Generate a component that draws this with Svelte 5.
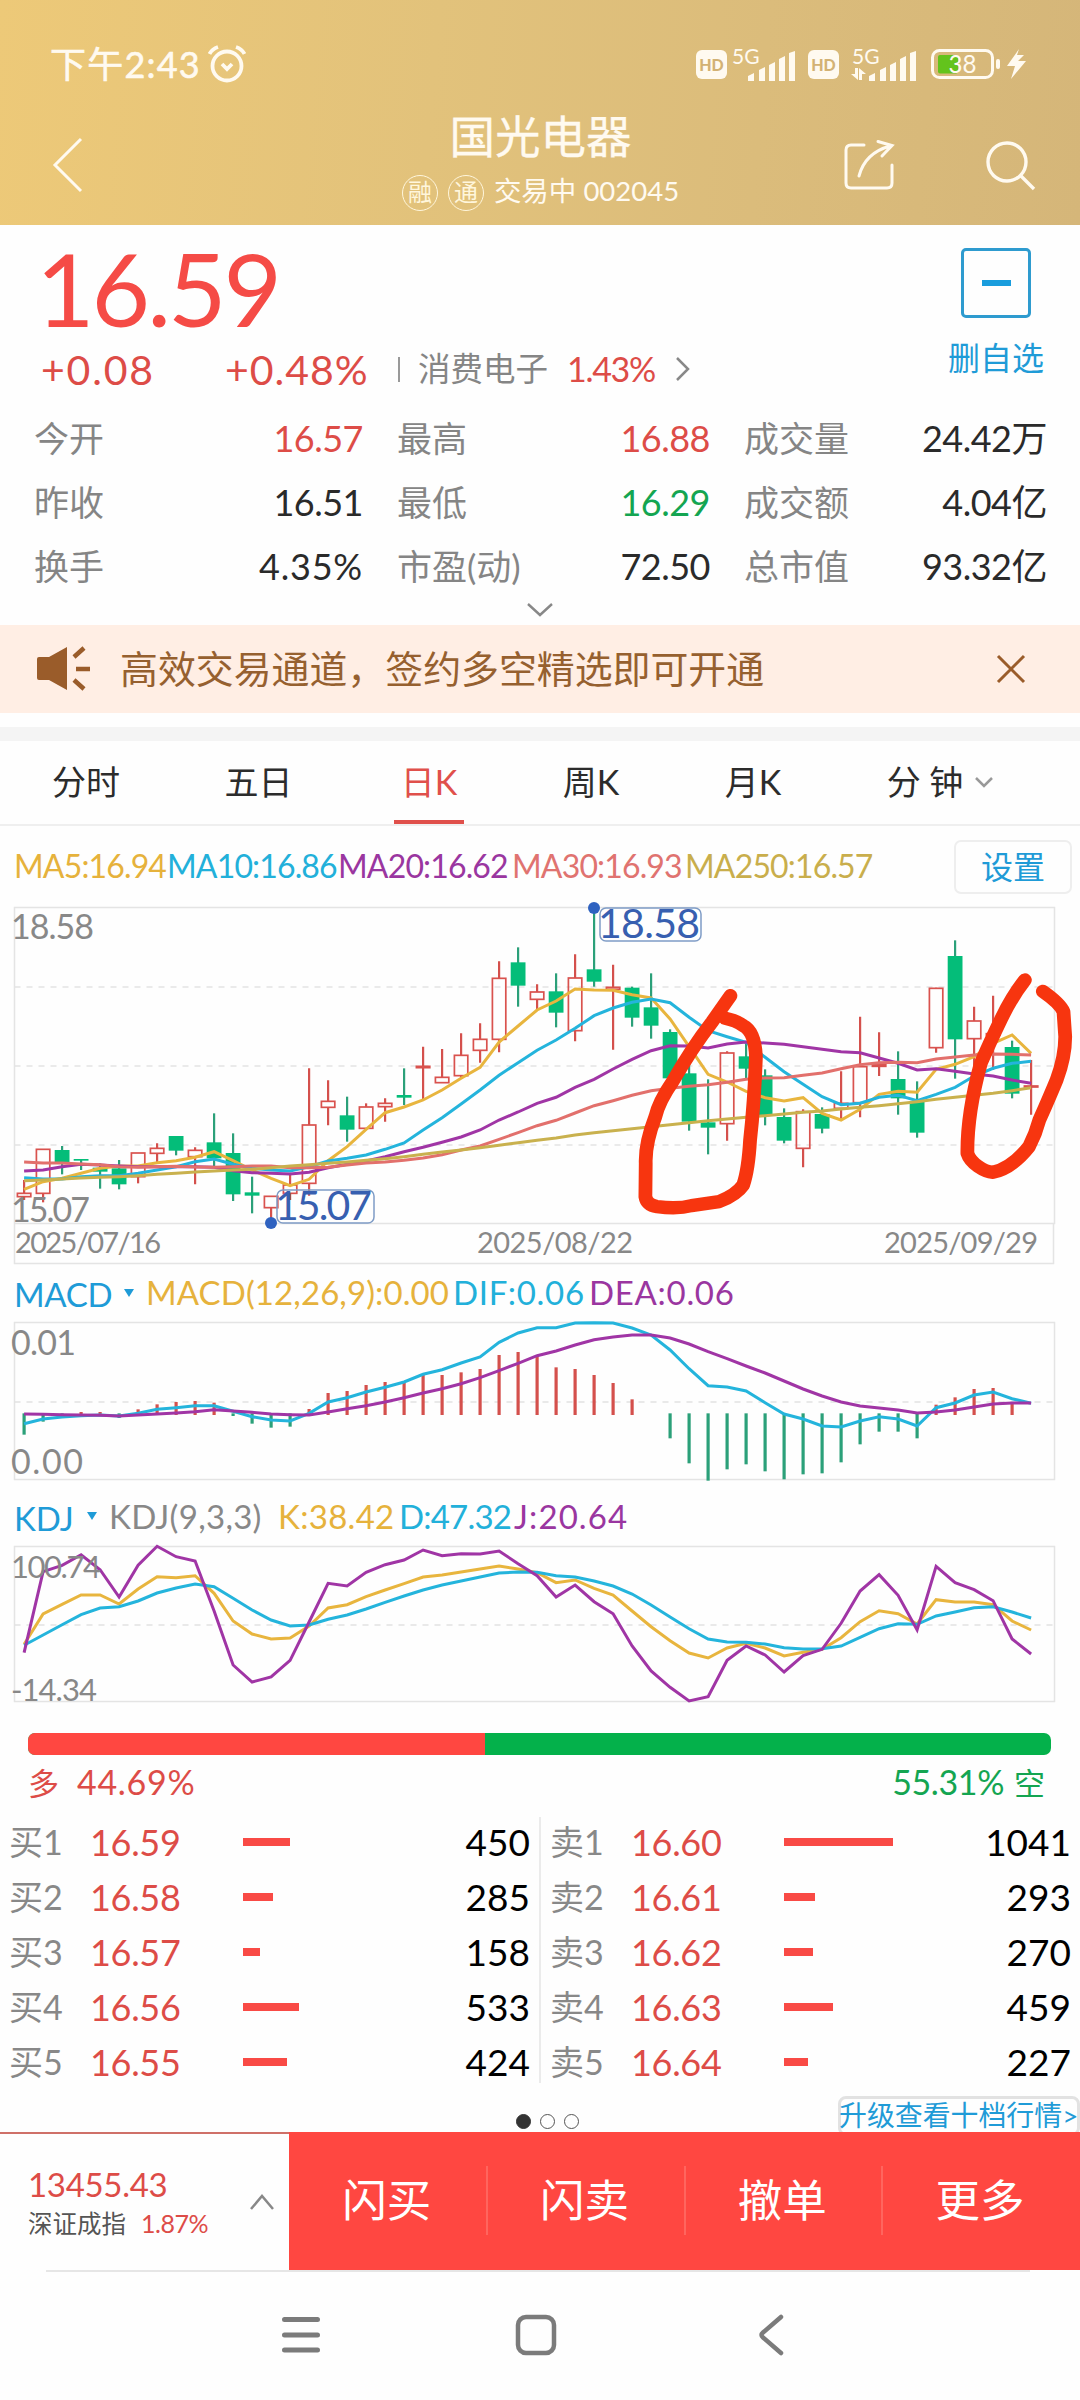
<script>
  // Horizontal position of the n-th trading day.
  const px = (i) => 24.1 + 19 * i;
  // Chart data is stored in thirds of a pixel below the chart origin.
  const main = (v) => 830 + v / 3;
  const sub = (v) => 1270 + v / 3;

  const line = (values, scale) =>
    values.map((v, i) => `${px(i).toFixed(1)},${scale(v).toFixed(1)}`).join(' ');

  // [direction, body top, body bottom, high, low]
  const candles = [
    ['r', 1090, 1100, 1050, 1110], ['r', 958, 1090, 958, 1117], ['g', 960, 998, 948, 1033],
    ['g', 987, 992, 987, 1020], ['g', 1013, 1025, 1000, 1076], ['g', 1015, 1063, 990, 1078],
    ['r', 969, 1040, 969, 1060], ['r', 955, 970, 940, 1000], ['g', 918, 962, 918, 976],
    ['r', 961, 980, 952, 1063], ['g', 937, 985, 850, 1010], ['g', 969, 1093, 910, 1113],
    ['g', 1087, 1097, 1040, 1150], ['r', 1099, 1133, 1099, 1170], ['r', 1065, 1090, 1030, 1110],
    ['r', 885, 1060, 715, 1097], ['r', 814, 832, 751, 886], ['g', 856, 899, 800, 935],
    ['r', 831, 895, 820, 895], ['r', 820, 830, 805, 875], ['g', 795, 803, 715, 825],
    ['r', 709, 713, 650, 808], ['r', 742, 758, 657, 758], ['r', 676, 737, 610, 745],
    ['r', 628, 661, 580, 698], ['r', 445, 628, 394, 667], ['g', 397, 467, 352, 530],
    ['r', 486, 508, 463, 540], ['g', 484, 548, 430, 592], ['r', 444, 602, 373, 634],
    ['g', 418, 455, 233, 470], ['r', 472, 478, 404, 659], ['g', 473, 563, 470, 590],
    ['g', 532, 587, 430, 626], ['g', 606, 745, 598, 745], ['g', 730, 875, 700, 902],
    ['g', 877, 893, 748, 973], ['r', 669, 881, 664, 932], ['g', 679, 716, 640, 750],
    ['g', 736, 855, 718, 886], ['g', 861, 932, 835, 940], ['r', 845, 955, 838, 1012],
    ['g', 852, 896, 832, 910], ['r', 820, 835, 724, 868], ['r', 710, 818, 560, 862],
    ['r', 704, 709, 607, 738], ['g', 747, 805, 664, 854], ['g', 815, 908, 754, 923],
    ['r', 475, 653, 473, 668], ['g', 378, 628, 331, 746], ['r', 573, 626, 530, 720],
    ['r', 611, 615, 497, 720], ['g', 651, 791, 632, 805], ['r', 768, 771, 690, 854]
  ];

  const averages = [
    { color: '#e8b53e', values: [1078, 1055, 1045, 1030, 1015, 1008, 1008, 998, 992, 982, 965, 992, 1020, 1045, 1067, 1048, 992, 950, 898, 848, 831, 810, 780, 745, 712, 636, 588, 540, 513, 477, 480, 481, 494, 504, 567, 650, 733, 756, 784, 803, 813, 803, 850, 870, 838, 793, 784, 787, 718, 703, 680, 640, 615, 670] },
    { color: '#24b4dc', values: [1043, 1047, 1047, 1040, 1037, 1037, 1030, 1020, 1010, 995, 987, 1003, 1015, 1020, 1023, 1010, 993, 985, 975, 958, 939, 900, 863, 822, 780, 736, 698, 661, 630, 595, 557, 534, 517, 507, 518, 562, 602, 620, 637, 682, 725, 763, 800, 824, 820, 802, 796, 812, 793, 772, 738, 715, 700, 694] },
    { color: '#a035a5', values: [1023, 1020, 1010, 1003, 1005, 1008, 1010, 1010, 1010, 1010, 1012, 1022, 1028, 1030, 1032, 1027, 1013, 1003, 993, 980, 965, 952, 937, 921, 900, 870, 846, 820, 802, 772, 748, 717, 688, 662, 647, 648, 654, 642, 636, 639, 643, 650, 658, 665, 668, 684, 700, 720, 716, 724, 732, 738, 750, 760] },
    { color: '#e2706c', values: [996, 999, 999, 1002, 1004, 1010, 1012, 1010, 1009, 1011, 1012, 1010, 1008, 1008, 1013, 1013, 1012, 1005, 999, 996, 991, 984, 974, 960, 948, 928, 908, 887, 871, 849, 827, 812, 796, 782, 775, 769, 764, 757, 748, 744, 743, 736, 729, 716, 704, 698, 697, 698, 687, 681, 675, 672, 673, 675] },
    { color: '#c9b14e', values: [1052, 1050, 1047, 1044, 1042, 1040, 1037, 1033, 1030, 1026, 1023, 1020, 1018, 1013, 1008, 1004, 1000, 996, 991, 986, 980, 973, 966, 960, 953, 946, 938, 931, 924, 915, 908, 902, 896, 890, 884, 878, 872, 867, 862, 857, 852, 847, 843, 837, 832, 827, 821, 815, 808, 802, 796, 790, 782, 773] }
  ];

  const histogram = [494, 455, 438, 426, 426, 444, 418, 403, 396, 393, 398, 438, 461, 473, 470, 417, 369, 363, 345, 336, 337, 315, 315, 307, 297, 255, 246, 258, 292, 297, 315, 339, 388, 0, 505, 580, 632, 598, 583, 604, 628, 613, 610, 577, 523, 485, 485, 505, 404, 382, 357, 354, 400, 0];
  const macdLines = [
    { color: '#24b4dc', values: [461, 447, 441, 437, 435, 438, 430, 418, 413, 407, 407, 424, 440, 450, 453, 430, 396, 383, 366, 352, 336, 313, 299, 279, 261, 217, 189, 173, 173, 159, 158, 159, 174, 195, 240, 296, 347, 351, 363, 398, 432, 447, 468, 471, 453, 440, 447, 468, 413, 399, 375, 366, 386, 400] },
    { color: '#a035a5', values: [432, 433, 434, 435, 436, 438, 435, 432, 429, 425, 419, 423, 427, 432, 434, 435, 426, 416, 407, 396, 383, 369, 356, 341, 323, 302, 280, 257, 243, 225, 209, 201, 195, 195, 204, 222, 245, 266, 288, 309, 333, 357, 378, 396, 408, 414, 420, 429, 426, 420, 411, 402, 399, 399] }
  ];
  const kdjLines = [
    { color: '#e8b53e', values: [1123, 1032, 1003, 975, 975, 1002, 957, 920, 923, 917, 970, 1053, 1092, 1107, 1104, 1068, 1014, 1004, 980, 960, 941, 921, 915, 906, 897, 888, 897, 908, 938, 930, 955, 975, 1023, 1070, 1112, 1149, 1164, 1134, 1120, 1134, 1158, 1147, 1138, 1103, 1055, 1022, 1031, 1062, 989, 996, 996, 1004, 1053, 1080] },
    { color: '#24b4dc', values: [1126, 1095, 1064, 1034, 1014, 1010, 993, 969, 954, 942, 950, 985, 1020, 1050, 1068, 1065, 1048, 1035, 1017, 997, 978, 960, 945, 933, 921, 909, 906, 907, 917, 921, 933, 948, 972, 1005, 1041, 1076, 1107, 1116, 1117, 1122, 1133, 1137, 1136, 1128, 1102, 1076, 1061, 1063, 1038, 1026, 1013, 1010, 1026, 1044] },
    { color: '#a035a5', values: [1148, 905, 886, 854, 899, 981, 886, 829, 860, 873, 1023, 1185, 1236, 1221, 1171, 1056, 940, 948, 907, 884, 870, 840, 857, 851, 852, 843, 881, 917, 981, 945, 995, 1031, 1128, 1203, 1252, 1293, 1280, 1171, 1128, 1155, 1206, 1157, 1138, 1060, 963, 914, 976, 1080, 889, 938, 959, 992, 1107, 1152] }
  ];

  const stats = [
    ['今开', '16.57', 'up'], ['最高', '16.88', 'up'], ['成交量', '24.42万', ''],
    ['昨收', '16.51', ''], ['最低', '16.29', 'down'], ['成交额', '4.04亿', ''],
    ['换手', '4.35%', 'wide'], ['市盈(动)', '72.50', ''], ['总市值', '93.32亿', '']
  ];
  const tabs = ['分时', '五日', '日K', '周K', '月K'];
  const bids = [
    ['买1', '16.59', 47, '450'], ['买2', '16.58', 30, '285'], ['买3', '16.57', 17, '158'],
    ['买4', '16.56', 56, '533'], ['买5', '16.55', 44, '424']
  ];
  const asks = [
    ['卖1', '16.60', 109, '1041'], ['卖2', '16.61', 31, '293'], ['卖3', '16.62', 29, '270'],
    ['卖4', '16.63', 49, '459'], ['卖5', '16.64', 24, '227']
  ];
  const actions = ['闪买', '闪卖', '撤单', '更多'];
</script>

{#snippet bars()}
  <svg class="bars" width="48" height="30" viewBox="0 0 48 30">
    <path d="M0 25l6-3v8H0zM11 19l6-3v14h-6zM21 14l6-3v19h-6zM31 8l6-3v25h-6zM41 2l6-2v30h-6z" fill="#fffaf0" />
  </svg>
{/snippet}

{#snippet book(rows)}
  <div class="side">
    {#each rows as [label, price, width, count]}
      <div class="order">
        <span class="lv">{label}</span>
        <span class="pr">{price}</span>
        <i style:width="{width}px"></i>
        <span class="qty">{count}</span>
      </div>
    {/each}
  </div>
{/snippet}

<div class="phone">
  <header>
    <div class="status">
      <span class="clock">下午2:43</span>
      <svg class="alarm" width="38" height="38" viewBox="0 0 38 38" fill="none" stroke="#fffaf0" stroke-width="3.8">
        <circle cx="19" cy="21" r="14.5" />
        <path d="M1.500 9Q4 4 10 2M28 2q6 2 8.500 7M14 19l5 5 5-5" />
      </svg>
      <div class="icons">
        <span class="hd">HD</span>
        <span class="net"><small>5G</small>{@render bars()}</span>
        <span class="hd second">HD</span>
        <span class="net wide">
          <small>5G</small>
          <svg class="updown" width="15" height="12" viewBox="0 0 15 12"><path d="M4 0h3v12L0 6h4zM8 0l7 6h-4v6H8z" fill="#fffaf0" /></svg>
          {@render bars()}
        </span>
        <svg class="battery" width="96" height="32" viewBox="930 48 96 32">
          <rect x="932.500" y="50.500" width="60" height="27" rx="7" fill="none" stroke="#fffaf0" stroke-width="3" />
          <rect x="938" y="55" width="20" height="18.500" rx="2" fill="#63c31c" />
          <rect x="996" y="59" width="4" height="10" rx="2" fill="#fffaf0" />
          <text x="948.500" y="73" font-size="25" textLength="28" lengthAdjust="spacingAndGlyphs" fill="#fffaf0">38</text>
          <path d="M1019 49l-12 17h8l-4 13 15-18h-8l6-6h-7z" fill="#fffaf0" />
        </svg>
      </div>
    </div>
    <div class="titlebar">
      <svg class="back" width="32" height="56" viewBox="0 0 32 56" fill="none" stroke="#fffaf0" stroke-width="3"><path d="M29 2L3 28l26 26" /></svg>
      <div class="title">
        <h1>国光电器</h1>
        <p><b>融</b><b>通</b><span>交易中 002045</span></p>
      </div>
      <div class="tools">
        <svg width="52" height="52" viewBox="0 0 52 52" fill="none" stroke="#fffaf0" stroke-width="3">
          <path d="M21 6H8q-5 0-5 5v33q0 5 5 5h36q5 0 5-5V26M16 37Q22 14 47 7M35 2.500L49 6.500 39 17" stroke-linecap="round" />
        </svg>
        <svg width="52" height="52" viewBox="0 0 52 52" fill="none" stroke="#fffaf0" stroke-width="3.400">
          <circle cx="22" cy="23" r="19" /><path d="M35 36l14 14" />
        </svg>
      </div>
    </div>
  </header>

  <section class="quote">
    <div class="head">
      <div class="price">
        <strong>16.59</strong>
        <div class="change">
          <span class="diff">+0.08</span><span class="pct">+0.48%</span><i></i>
          <span class="sector">消费电子</span><span class="spct">1.43%</span>
          <svg width="16" height="26" viewBox="0 0 16 26" fill="none" stroke="#888" stroke-width="2.500"><path d="M2 2l11 11L2 24" /></svg>
        </div>
      </div>
      <div class="fav">
        <div class="box"><i></i></div>
        <span>删自选</span>
      </div>
    </div>
    <div class="stats">
      {#each stats as [label, value, tone]}
        <div><span>{label}</span><em class={tone}>{value}</em></div>
      {/each}
    </div>
    <svg class="more" width="28" height="16" viewBox="0 0 28 16" fill="none" stroke="#888" stroke-width="2.400"><path d="M2 2l12 11L26 2" /></svg>
  </section>

  <aside class="banner">
    <svg class="horn" width="56" height="46" viewBox="0 0 56 46">
      <path d="M1 13q0-2 2-2h10L31 1v43L13 34H3q-2 0-2-2z" fill="#9a5c2a" />
      <path d="M38 11l10-9M40 23h14M38 34l10 9" stroke="#9a5c2a" stroke-width="4.500" />
    </svg>
    <span>高效交易通道，签约多空精选即可开通</span>
    <svg class="close" width="30" height="30" viewBox="0 0 30 30" stroke="#9a5c2a" stroke-width="3"><path d="M2 2l26 26M28 2L2 28" /></svg>
  </aside>
  <div class="strip"></div>

  <nav class="tabs">
    {#each tabs as tab}
      <span class:active={tab === '日K'}>{tab}</span>
    {/each}
    <span class="minute">分 钟<svg width="18" height="12" viewBox="0 0 18 12" fill="none" stroke="#999" stroke-width="2.500"><path d="M1 2l8 8 8-8" /></svg></span>
  </nav>

  <div class="legend">
    <span class="y m5">MA5:16.94</span><span class="c m10">MA10:16.86</span><span class="p m20">MA20:16.62</span><span class="r m30">MA30:16.93</span><span class="k m250">MA250:16.57</span>
    <button>设置</button>
  </div>

  <svg class="chart" width="1080" height="370" viewBox="0 900 1080 370">
    <g fill="none" stroke="#e4e4e4" stroke-width="1.500">
      <path d="M14.500 907.500H1054.500V1223.500H14.500zM14.500 1223.500V1263.500H1053.500V1223.500" />
      <path d="M14.500 987H1054M14.500 1066H1054M14.500 1145H1054" stroke-dasharray="6 6" />
    </g>
    {#each candles as [tone, top, bottom, high, low], i}
      {#if tone === 'g'}
        <path d="M{px(i)} {main(high)}V{main(low)}" stroke="#2ba079" stroke-width="2.200" />
        <rect x={px(i) - 7.4} y={main(top)} width="14.800" height={(bottom - top) / 3} fill="#04bd79" />
      {:else}
        <path d="M{px(i)} {main(high)}V{main(top)}M{px(i)} {main(bottom)}V{main(low)}" stroke="#d4504c" stroke-width="2.200" />
        <rect x={px(i) - 6.7} y={main(top)} width="13.400" height={(bottom - top) / 3} fill="none" stroke="#d9524e" stroke-width="1.700" />
      {/if}
    {/each}
    {#each averages as { color, values }}
      <polyline points={line(values, main)} fill="none" stroke={color} stroke-width="3" />
    {/each}
    <g fill="#888" font-size="34">
      <text x="11" y="939" textLength="83">18.58</text>
      <text x="11" y="1222" textLength="79">15.07</text>
      <g font-size="29">
        <text x="15" y="1253" textLength="146">2025/07/16</text>
        <text x="477" y="1253" textLength="156">2025/08/22</text>
        <text x="884" y="1253" textLength="154">2025/09/29</text>
      </g>
    </g>
    <g fill="none" stroke="#7f9cc6" stroke-width="1.500">
      <rect x="600" y="908" width="101" height="33" rx="6" />
      <rect x="277" y="1190" width="97" height="33" rx="6" />
    </g>
    <g fill="#2f62c0"><circle cx="594" cy="908" r="6" /><circle cx="271" cy="1223" r="6" /></g>
    <g fill="#375fb0" font-size="41">
      <text x="598" y="938" textLength="102">18.58</text>
      <text x="275" y="1220" textLength="97">15.07</text>
    </g>
    <g transform="translate(540 830) scale(.3444 .3333)" fill="none" stroke="#f7350f" stroke-width="40" stroke-linecap="round" stroke-linejoin="round">
      <path d="M553 497L500 575Q440 655 385 755Q345 815 335 860Q305 940 307 1000L306 1100Q310 1125 340 1130Q400 1138 440 1127L520 1115Q570 1095 590 1065Q605 1020 610 930Q622 820 627 680Q624 605 590 587Q570 572 538 565" />
      <path d="M1408 450Q1370 500 1340 565Q1305 640 1280 700Q1240 850 1241 970C1250 1000 1290 1025 1315 1027Q1370 1015 1420 950Q1440 910 1450 870Q1480 800 1500 750Q1525 680 1525 620L1520 545Q1510 520 1460 484" />
    </g>
  </svg>

  <div class="subhead">
    <span class="pick macd">MACD</span><i></i>
    <span class="y s1">MACD(12,26,9):0.00</span><span class="c s2">DIF:0.06</span><span class="p s3">DEA:0.06</span>
  </div>
  <svg class="chart" width="1080" height="170" viewBox="0 1315 1080 170">
    <rect x="14.500" y="1322.500" width="1040" height="157" fill="none" stroke="#e4e4e4" stroke-width="1.500" />
    <path d="M14.500 1402H1054" stroke="#e2e2e2" stroke-width="1.500" stroke-dasharray="6 6" />
    {#each histogram as v, i}
      {#if v}
        <path d="M{px(i)} {sub(v > 433 ? 430 : 435)}V{sub(v)}" stroke={v > 433 ? '#2ba079' : '#d4504c'} stroke-width="3.200" />
      {/if}
    {/each}
    {#each macdLines as { color, values }}
      <polyline points={line(values, sub)} fill="none" stroke={color} stroke-width="3" />
    {/each}
    <g fill="#888" font-size="34">
      <text x="11" y="1355" textLength="65">0.01</text>
      <text x="11" y="1474" textLength="72">0.00</text>
    </g>
  </svg>

  <div class="subhead low">
    <span class="pick kdj">KDJ</span><i></i>
    <span class="n s4">KDJ(9,3,3)</span><span class="y s5">K:38.42</span><span class="c s6">D:47.32</span><span class="p s7">J:20.64</span>
  </div>
  <svg class="chart" width="1080" height="170" viewBox="0 1540 1080 170">
    <rect x="14.500" y="1546.500" width="1040" height="155" fill="none" stroke="#e4e4e4" stroke-width="1.500" />
    <path d="M14.500 1625H1054" stroke="#e2e2e2" stroke-width="1.500" stroke-dasharray="6 6" />
    {#each kdjLines as { color, values }}
      <polyline points={line(values, sub)} fill="none" stroke={color} stroke-width="3" />
    {/each}
    <g fill="#888" font-size="31">
      <text x="11" y="1578" textLength="90">100.74</text>
      <text x="11" y="1701" textLength="86">-14.34</text>
    </g>
  </svg>

  <section class="ratio">
    <div class="meter"><i></i></div>
    <p><span class="long">多<em>44.69%</em></span><span class="short"><em>55.31%</em>空</span></p>
  </section>

  <section class="book">
    {@render book(bids)}
    {@render book(asks)}
  </section>

  <div class="pager">
    <div class="dots"><i class="on"></i><i></i><i></i></div>
    <span class="upgrade">升级查看十档行情&gt;</span>
  </div>

  <footer>
    <div class="index">
      <div>
        <strong>13455.43</strong>
        <p>深证成指<em>1.87%</em></p>
      </div>
      <svg width="26" height="18" viewBox="0 0 26 18" fill="none" stroke="#888" stroke-width="2.500"><path d="M2 16L13 3l11 13" /></svg>
    </div>
    {#each actions as action}
      <button>{action}</button>
    {/each}
  </footer>

  <div class="sysnav">
    <svg width="40" height="40" viewBox="0 0 40 40" stroke="#7b7b7b" stroke-width="5" stroke-linecap="round"><path d="M3.500 4.500h33M3.500 20h33M3.500 35h33" /></svg>
    <svg width="42" height="42" viewBox="0 0 42 42" fill="none" stroke="#7b7b7b" stroke-width="4.500"><rect x="3" y="3" width="36" height="36" rx="8" /></svg>
    <svg class="nav-back" width="28" height="42" viewBox="0 0 28 42" fill="none" stroke="#7b7b7b" stroke-width="4.500" stroke-linecap="round"><path d="M24 3L6 18.500q-3 2.500 0 5L24 39" /></svg>
  </div>
</div>

<style>
  :global(body) { margin: 0; background: #fefefe; }
  .phone { width: 1080px; height: 2400px; overflow: hidden; font-family: Lato, 'Noto Sans CJK SC', sans-serif; color: #2c2c2c; line-height: 1; background: #fefefe; }
  svg { display: block; flex: none; }
  h1, p { margin: 0; font-weight: 400; }
  em, i { font-style: normal; }
  button { font: inherit; border: 0; background: none; padding: 0; }
  span, strong, em { white-space: nowrap; }

  header { height: 225px; background: linear-gradient(95deg, #edc978 0%, #e2c27b 40%, #dbbc7b 70%, #d5b679 100%); color: #fffaf0; }
  .status { display: flex; height: 112px; padding: 16px 54px 0 50px; box-sizing: border-box; align-items: center; }
  .clock { font-size: 36px; width: 158px; letter-spacing: 1.2px; -webkit-text-stroke: 0.6px #fffaf0; }
  .icons { display: flex; align-items: center; margin-left: auto; }
  .hd { width: 31px; height: 29px; border-radius: 6px; background: #fffaf0; color: #d3b274; font-size: 16px; font-weight: 900; text-align: center; line-height: 29px; }
  .second { margin-left: 12px; }
  .net { position: relative; width: 69px; height: 34px; }
  .net small { position: absolute; left: 5px; top: 0; font-size: 21px; line-height: 18px; }
  .net .bars { position: absolute; right: 0; bottom: 0; }
  .wide { width: 78px; margin-right: 13px; }
  .wide small { left: 13px; }
  .updown { position: absolute; left: 12px; bottom: 1px; }
  .titlebar { display: flex; height: 113px; justify-content: space-between; padding-left: 52px; }
  .back { margin-top: 25px; }
  .title { width: 270px; margin-left: 154px; text-align: center; }
  h1 { font-size: 45.500px; line-height: 50px; -webkit-text-stroke: 0.3px #fffaf0; }
  .title p { display: flex; gap: 10px; justify-content: center; align-items: center; margin-top: 12px; height: 38px; font-size: 27.500px; }
  .title p span { margin-top: -4px; }
  .title b { flex: none; width: 34px; height: 34px; border: 1.500px solid #fff6dc; border-radius: 50%; font-size: 24px; font-weight: 400; line-height: 32px; color: #fff6dc; }
  .tools { display: flex; gap: 90px; width: 237px; margin-top: 27px; }

  .quote { height: 400px; }
  .head { display: flex; justify-content: space-between; height: 181px; padding: 0 34px 0 41px; }
  .price strong { display: block; margin: 9px 0 7px -5px; height: 108px; line-height: 108px; font-size: 101px; font-weight: 400; letter-spacing: -3px; color: #f54b46; }
  .change { display: flex; align-items: center; height: 40px; color: #dd4c47; }
  .diff { width: 184px; font-size: 41px; letter-spacing: 1.800px; }
  .pct { width: 173px; font-size: 41px; letter-spacing: 1px; }
  .change i { width: 2px; height: 25px; margin-right: 18px; background: #999; }
  .sector { width: 149px; font-size: 32.500px; color: #858585; }
  .spct { width: 108px; font-size: 34px; letter-spacing: -1.300px; }
  .fav { display: flex; flex-direction: column; align-items: center; width: 100px; padding-top: 23px; font-size: 32px; color: #1f9bd7; }
  .box { display: grid; place-items: center; width: 64px; height: 64px; border: 3px solid #2e9bcf; border-radius: 5px; }
  .box i { width: 29px; height: 6px; background: #1a9ddd; }
  .fav span { margin-top: 24px; }
  .stats { display: grid; grid-template-columns: 329px 313px 303px; column-gap: 34px; padding-left: 34px; grid-auto-rows: 64px; }
  .stats div { display: flex; justify-content: space-between; align-items: center; font-size: 35px; color: #858585; }
  .stats em { font-size: 36px; letter-spacing: -0.500px; color: #2a2a2a; }
  .stats em.wide { letter-spacing: 0.800px; margin: 0; width: auto; }
  .stats em.up { color: #dd4c47; }
  .stats em.down { color: #14a551; }
  .more { margin: 4px auto 0; }

  .banner { display: flex; align-items: center; height: 88px; padding: 0 54px 0 36px; background: #ffeee4; color: #96602f; font-size: 37.900px; }
  .horn { margin-right: 28px; }
  .close { margin-left: auto; }
  .strip { height: 14px; margin-top: 14px; background: #f4f4f4; }

  .tabs { display: grid; grid-template-columns: 172px 173px 168px 156px 168px 206px; height: 83px; border-bottom: 2px solid #efefef; font-size: 34px; }
  .tabs span { display: flex; justify-content: center; align-items: center; position: relative; padding-bottom: 2px; }
  .tabs .active { color: #e0504b; }
  .active::after { content: ''; position: absolute; left: 49px; bottom: 0; width: 70px; height: 4px; background: #e0504b; }
  .minute svg { margin-left: 12px; }

  .legend { display: flex; align-items: center; height: 74px; padding: 0 8px 0 14px; font-size: 32px; letter-spacing: -0.850px; }
  .legend button { width: 114px; height: 50px; margin-left: auto; border: 2px solid #eee; border-radius: 7px; color: #1f9bd7; font-size: 32px; letter-spacing: 0; line-height: 46px; box-sizing: content-box; margin-top: 7px; }
  .legend span { padding-top: 6px; }
  .m5 { width: 153px; }
  .m10 { width: 171px; }
  .m20 { width: 174px; }
  .m30 { width: 173px; }
  .y { color: #e6b23c; }
  .c { color: #22b0da; }
  .p { color: #9a36a0; }
  .r { color: #e07370; }
  .k { color: #c9ae4c; }
  .n { color: #888; }

  .subhead { display: flex; align-items: center; height: 45px; padding-left: 14px; font-size: 33px; }
  .low { height: 48px; padding-top: 7px; }
  .subhead i { border: 5px solid transparent; border-top: 8px solid #1f9bd7; border-bottom: 0; margin-right: 12px; }
  .pick { color: #1f9bd7; padding-top: 4px; }
  .macd { width: 110px; letter-spacing: -0.300px; }
  .kdj { width: 73px; }
  .s1 { width: 307px; letter-spacing: 0.100px; }
  .s2 { width: 136px; letter-spacing: 0.700px; }
  .s3 { letter-spacing: 0.700px; }
  .s4 { width: 169px; letter-spacing: 0.300px; }
  .s5 { width: 121px; letter-spacing: 0.300px; }
  .s6 { width: 115px; letter-spacing: -0.800px; }
  .s7 { letter-spacing: 1.100px; }

  .ratio { height: 107px; padding: 23px 29px 0 28px; box-sizing: border-box; }
  .meter { height: 22px; border-radius: 7px; overflow: hidden; background: #04b14b; }
  .meter i { display: block; width: 44.69%; height: 100%; background: #ff4741; }
  .ratio p { display: flex; justify-content: space-between; margin-top: 10px; height: 34px; align-items: center; font-size: 31px; }
  .ratio em { font-size: 34px; }
  .long { color: #dd4c47; }
  .long em { margin-left: 18px; letter-spacing: 0.700px; }
  .short { color: #14a551; margin-right: 6px; }
  .short em { margin-right: 10px; letter-spacing: -0.400px; }

  .book { display: flex; height: 266px; }
  .side { width: 539px; }
  .side + .side { border-left: 2px solid #ebebeb; }
  .order { display: grid; grid-template-columns: 81px 153px 120px 1fr; align-items: center; height: 55px; padding: 0 9px; position: relative; top: -3px; }
  .order .lv { font-size: 34px; color: #888; }
  .order .pr { font-size: 36px; letter-spacing: -0.300px; color: #dd4c47; }
  .order i { height: 8px; background: #f94a45; }
  .order .qty { font-size: 37px; text-align: right; color: #000; }

  .pager { position: relative; display: flex; justify-content: space-between; height: 49px; align-items: flex-end; overflow: hidden; }
  .dots { display: flex; gap: 9px; padding: 0 0 3px 516px; }
  .dots i { width: 13px; height: 13px; border: 1.500px solid #555; border-radius: 50%; }
  .dots .on { background: #333; border-color: #333; }
  .upgrade { height: 34px; margin-bottom: -4px; border: 3px solid #e2e2e2; border-radius: 8px; color: #1f9bd7; font-size: 27.900px; line-height: 33px; width: 236px; text-indent: -2px; }

  footer { display: flex; height: 138px; background: #ff4741; }
  .index { display: flex; align-items: center; justify-content: space-between; width: 289px; padding: 0 14px 0 28px; box-sizing: border-box; background: #fefefe; border-top: 2px solid #cf7068; }
  .index strong { display: block; font-size: 33px; font-weight: 400; letter-spacing: -0.300px; color: #dd4c47; }
  .index p { margin-top: 10px; font-size: 24.500px; color: #555; }
  .index em { margin-left: 15px; font-size: 25px; letter-spacing: -0.500px; color: #dd4c47; }
  footer button { flex: 1; position: relative; left: -1px; padding-bottom: 2px; color: #fff; font-size: 44.500px; }
  footer button + button::before { content: ''; position: absolute; left: 0; top: 34px; width: 2px; height: 69px; background: #ff655e; }

  .sysnav { display: flex; align-items: center; gap: 194px; height: 126px; padding-left: 235px; border-top: 2px solid #e6e6e6; width: 749px; margin-left: 46px; }
  .nav-back { margin-left: 6px; }
</style>
